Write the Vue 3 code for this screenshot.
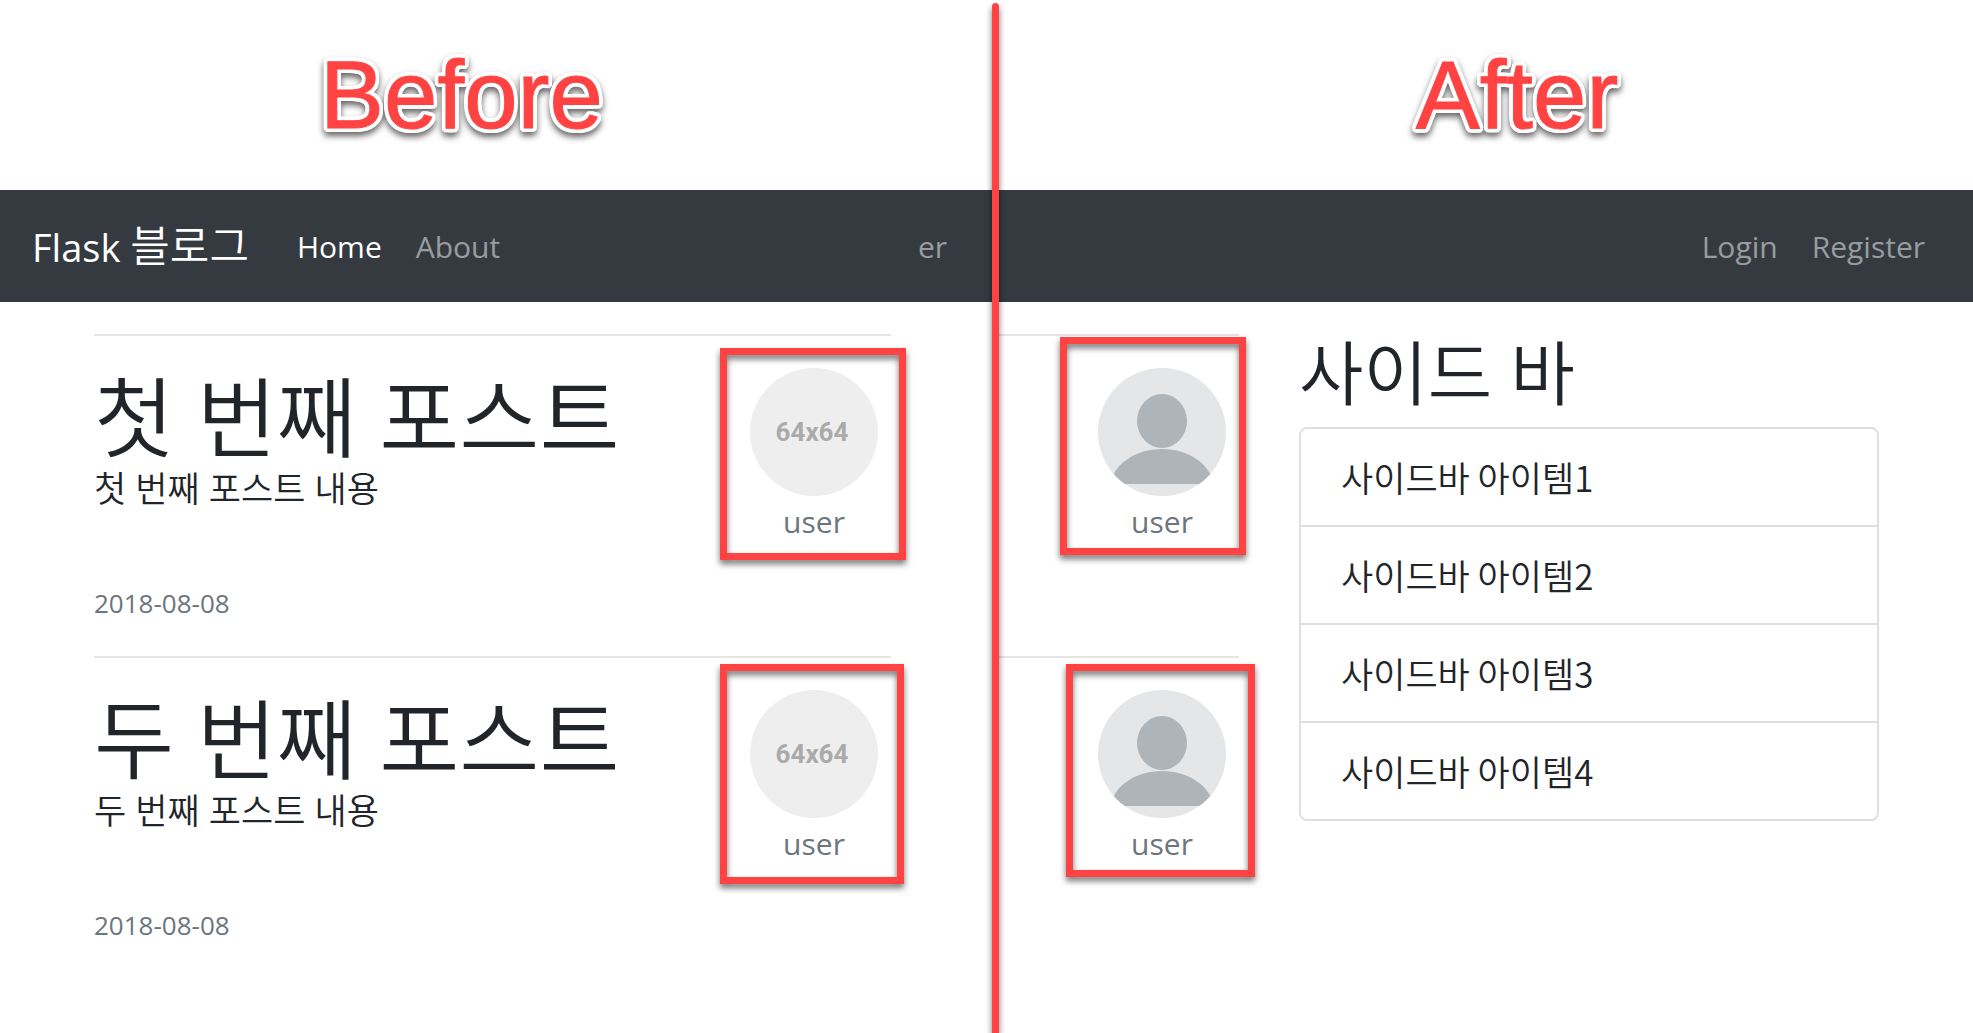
<script setup>
const beforePosts = [
  { id: 1, title: '첫 번째 포스트', body: '첫 번째 포스트 내용', date: '2018-08-08', author: 'user', frame: 'frame-before-first' },
  { id: 2, title: '두 번째 포스트', body: '두 번째 포스트 내용', date: '2018-08-08', author: 'user', frame: 'frame-before-second' },
]

const afterPosts = [
  { id: 1, author: 'user', frame: 'frame-after-first' },
  { id: 2, author: 'user', frame: 'frame-after-second' },
]

const sidebarItems = ['사이드바 아이템1', '사이드바 아이템2', '사이드바 아이템3', '사이드바 아이템4']
</script>

<template>
  <main class="compare">
    <section class="panel before">
      <h2 class="caption">Before</h2>
      <nav class="navbar">
        <a class="brand" href="#">Flask <span class="brand-ko">블로그</span></a>
        <a class="nav-link active" href="#">Home</a>
        <a class="nav-link" href="#">About</a>
        <a class="nav-link push" href="#">er</a>
      </nav>
      <div class="feed">
        <article v-for="post in beforePosts" :key="post.id" class="post">
          <div class="post-text">
            <h1 class="post-title">{{ post.title }}</h1>
            <p class="post-body">{{ post.body }}</p>
            <time class="post-date" :datetime="post.date">{{ post.date }}</time>
          </div>
          <div class="author">
            <div class="avatar placeholder">64x64</div>
            <span class="author-name">{{ post.author }}</span>
            <span class="frame" :class="post.frame"></span>
          </div>
        </article>
      </div>
    </section>

    <section class="panel after">
      <h2 class="caption">After</h2>
      <nav class="navbar">
        <a class="nav-link push" href="#">Login</a>
        <a class="nav-link" href="#">Register</a>
      </nav>
      <div class="content">
        <div class="feed">
          <article v-for="post in afterPosts" :key="post.id" class="post">
            <div class="author">
              <svg class="avatar" viewBox="0 0 128 128" aria-hidden="true">
                <rect width="128" height="128" fill="#e4e6e8" />
                <ellipse cx="64" cy="53" rx="25" ry="27" fill="#aeb4b8" />
                <path d="M12.5 116 C15 97 37 81 64 81 C91 81 113 97 115.5 116 Z" fill="#aeb4b8" />
              </svg>
              <span class="author-name">{{ post.author }}</span>
              <span class="frame" :class="post.frame"></span>
            </div>
          </article>
        </div>
        <aside class="sidebar">
          <h2 class="sidebar-title">사이드 바</h2>
          <ul class="list">
            <li v-for="item in sidebarItems" :key="item" class="list-item">{{ item }}</li>
          </ul>
        </aside>
      </div>
      <div class="divider"></div>
    </section>
  </main>
</template>

<style>
body {
  margin: 0;
  background: #fff;
}
</style>

<style scoped>
.compare {
  display: grid;
  grid-template-columns: minmax(0, 995fr) minmax(0, 978fr);
  min-height: 100vh;
  overflow: hidden;
  color: #212529;
  font-family: "Open Sans", "Noto Sans CJK KR", sans-serif;
  font-size: 30px;
}

.panel {
  position: relative;
}

.caption {
  box-sizing: border-box;
  height: 190px;
  margin: 0;
  color: #ff4343;
  font: 400 96px/190px "Liberation Sans", sans-serif;
  text-align: center;
  -webkit-text-stroke: 1px #ff4343;
  text-shadow:
    4px 0 #fff, -4px 0 #fff, 0 4px #fff, 0 -4px #fff,
    3px 3px #fff, -3px 3px #fff, 3px -3px #fff, -3px -3px #fff,
    4px 2px #fff, -4px 2px #fff, 4px -2px #fff, -4px -2px #fff,
    2px 4px #fff, -2px 4px #fff, 2px -4px #fff, -2px -4px #fff;
  filter: drop-shadow(0 4px 3px rgba(0, 0, 0, 0.6));
}

.before .caption {
  padding-right: 72px;
}

.after .caption {
  padding-left: 66px;
}

.navbar {
  display: flex;
  align-items: center;
  gap: 34px;
  box-sizing: border-box;
  height: 112px;
  padding: 2px 48px 0 32px;
  background: #343a40;
}

.brand {
  margin-right: 14px;
  padding-bottom: 2px;
  color: #fff;
  font-size: 38px;
  line-height: 64px;
  text-decoration: none;
}

.brand-ko {
  font-size: 43px;
  font-weight: 350;
}

.nav-link {
  color: rgba(255, 255, 255, 0.5);
  line-height: 48px;
  text-decoration: none;
}

.nav-link.active {
  color: #fff;
}

.push {
  margin-left: auto;
}

.before .feed {
  padding: 32px 104px 0 94px;
}

.post {
  display: flex;
  justify-content: space-between;
  box-sizing: border-box;
  height: 322px;
  padding: 32px 13px 0 0;
  border-top: 2px solid #e5e5e5;
}

.post-title,
.post-body,
.sidebar-title,
.list-item {
  font-weight: 350;
}

.post-title {
  margin: 0;
  font-size: 87px;
  line-height: 98px;
}

.post-body {
  margin: 0 0 71px;
  font-size: 35px;
  line-height: 46px;
}

.post-date {
  display: block;
  color: #6c757d;
  font-size: 26px;
  line-height: 40px;
}

.author {
  position: relative;
  display: flex;
  flex-direction: column;
  align-items: center;
  width: 128px;
}

.avatar {
  display: block;
  width: 128px;
  height: 128px;
  border-radius: 50%;
}

.placeholder {
  box-sizing: border-box;
  padding-right: 4px;
  background: #eee;
  color: #aaa;
  font: 700 26px/128px Roboto, sans-serif;
  text-align: center;
}

.author-name {
  margin-top: 2px;
  color: #6c757d;
  line-height: 48px;
}

.frame {
  position: absolute;
  border: 7px solid #ff4343;
  filter: drop-shadow(0 4px 3px rgba(0, 0, 0, 0.55));
}

.frame-before-first {
  inset: -20px -28px auto -30px;
  height: 198px;
}

.frame-before-second {
  inset: -26px -26px auto -30px;
  height: 206px;
}

.frame-after-first {
  inset: -31px -20px auto -38px;
  height: 204px;
}

.frame-after-second {
  inset: -26px -29px auto -32px;
  height: 199px;
}

.content {
  display: flex;
  gap: 60px;
  padding: 32px 94px 0 0;
}

.after .feed {
  flex: 0 0 244px;
}

.after .post {
  justify-content: flex-end;
}

.sidebar {
  flex: 1;
  min-width: 0;
}

.sidebar-title {
  margin: 0 0 14px;
  font-size: 70px;
  line-height: 79px;
}

.list {
  margin: 0;
  padding: 0;
  border: 2px solid #dfdfdf;
  border-radius: 8px;
  list-style: none;
}

.list-item {
  padding: 24px 40px;
  font-family: "Noto Sans CJK KR", sans-serif;
  font-size: 35px;
  line-height: 48px;
}

.list-item + .list-item {
  border-top: 2px solid #dfdfdf;
}

.divider {
  position: absolute;
  top: 3px;
  bottom: 0;
  left: -3px;
  width: 7px;
  border-radius: 4px 4px 0 0;
  background: #ff4343;
  box-shadow: 0 4px 6px rgba(0, 0, 0, 0.55);
}
</style>
